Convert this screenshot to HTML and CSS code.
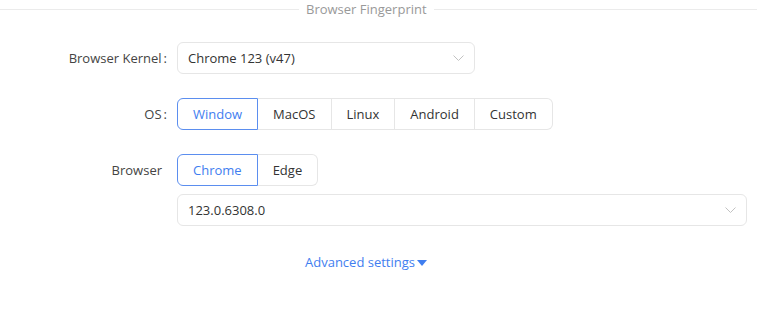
FILE: index.html
```html
<!DOCTYPE html>
<html lang="en">
<head>
    <meta charset="UTF-8">
    <title>Browser Fingerprint</title>
    <link rel="stylesheet" href="styles.css">
</head>
<body>
    <div class="divider">
        <span class="divider-line divider-left"></span>
        <span class="divider-title">Browser Fingerprint</span>
        <span class="divider-line divider-right"></span>
    </div>

    <form class="fp-form">
        <div class="form-row">
            <label class="form-label colon">Browser Kernel</label>
            <div class="form-control">
                <div class="select kernel-select">
                    <span>Chrome 123 (v47)</span>
                    <svg class="chevron" width="11" height="7" viewBox="0 0 11 7"><path d="M0.5 0.5 L5.5 5.5 L10.5 0.5" fill="none" stroke="#c2c2c2" stroke-width="1"/></svg>
                </div>
            </div>
        </div>

        <div class="form-row">
            <label class="form-label colon">OS</label>
            <div class="form-control">
                <div class="radio-group">
                    <span class="radio-btn checked">Window</span>
                    <span class="radio-btn">MacOS</span>
                    <span class="radio-btn">Linux</span>
                    <span class="radio-btn">Android</span>
                    <span class="radio-btn">Custom</span>
                </div>
            </div>
        </div>

        <div class="form-row browser-row">
            <label class="form-label plain">Browser</label>
            <div class="form-control">
                <div class="radio-group">
                    <span class="radio-btn checked">Chrome</span>
                    <span class="radio-btn">Edge</span>
                </div>
                <div class="select version-select">
                    <span>123.0.6308.0</span>
                    <svg class="chevron" width="11" height="7" viewBox="0 0 11 7"><path d="M0.5 0.5 L5.5 5.5 L10.5 0.5" fill="none" stroke="#c2c2c2" stroke-width="1"/></svg>
                </div>
            </div>
        </div>

        <div class="advanced">
            <a href="#" class="advanced-link">Advanced settings<svg class="caret" width="10" height="7" viewBox="0 0 10 7"><path d="M0 0 H10 L5 6 Z" fill="#3f7ef0"/></svg></a>
        </div>
    </form>
</body>
</html>
```

FILE: styles.css
```css
body {
    margin: 0;
    font-family: "Open Sans", "Noto Sans", Arial, sans-serif;
    font-size: 13px;
    color: #333;
    background: #fff;
}
.divider {
    display: flex;
    align-items: center;
    height: 20px;
    margin-top: -1px;
}
.divider-line {
    height: 1px;
    background-color: #ebebeb;
}
.divider-left {
    width: 299px;
}
.divider-right {
    flex: 1;
}
.divider-title {
    padding: 0 7px;
    color: #999;
    font-size: 13px;
}
.fp-form {
    padding-top: 23px;
}
.form-row {
    display: flex;
    align-items: flex-start;
    margin-bottom: 24px;
}
.form-label {
    width: 167px;
    height: 32px;
    line-height: 32px;
    text-align: right;
    color: #444;
    flex-shrink: 0;
}
.form-label.colon::after {
    content: ":";
    margin: 0 0 0 2px;
}
.form-label.plain {
    width: 162px;
    margin-right: 5px;
}
.form-control {
    margin-left: 10px;
    display: flex;
    flex-direction: column;
    gap: 8px;
}
.select {
    display: flex;
    align-items: center;
    justify-content: space-between;
    height: 32px;
    box-sizing: border-box;
    border: 1px solid #e6e6e6;
    border-radius: 6px;
    padding: 0 10px;
    color: #333;
}
.kernel-select {
    width: 298px;
}
.version-select {
    width: 570px;
}
.chevron {
    display: block;
}
.radio-group {
    display: flex;
}
.radio-btn {
    height: 32px;
    line-height: 30px;
    box-sizing: border-box;
    padding: 0 15px;
    border: 1px solid #e6e6e6;
    border-left-width: 0;
    color: #333;
}
.radio-btn:first-child {
    border-left-width: 1px;
    border-radius: 6px 0 0 6px;
}
.radio-btn:last-child {
    border-radius: 0 6px 6px 0;
}
.radio-btn.checked {
    border-color: #5b8eef;
    color: #3f7ef0;
}
.browser-row {
    margin-bottom: 27px;
}
.advanced {
    width: 732px;
    text-align: center;
}
.advanced-link {
    color: #3f7ef0;
    text-decoration: none;
}
.caret {
    margin-left: 2px;
}
```
